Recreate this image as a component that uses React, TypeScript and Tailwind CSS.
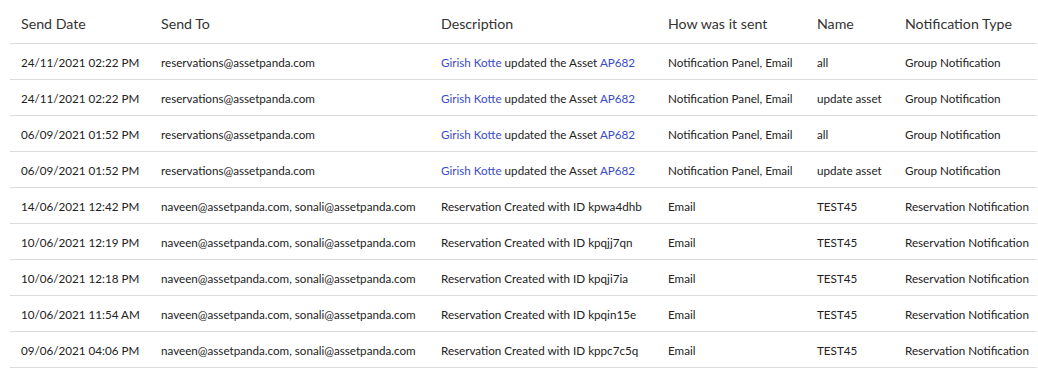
const rows = [
  { date: "24/11/2021 02:22 PM", to: "reservations@assetpanda.com", kind: "asset", via: "Notification Panel, Email", name: "all", type: "Group Notification" },
  { date: "24/11/2021 02:22 PM", to: "reservations@assetpanda.com", kind: "asset", via: "Notification Panel, Email", name: "update asset", type: "Group Notification" },
  { date: "06/09/2021 01:52 PM", to: "reservations@assetpanda.com", kind: "asset", via: "Notification Panel, Email", name: "all", type: "Group Notification" },
  { date: "06/09/2021 01:52 PM", to: "reservations@assetpanda.com", kind: "asset", via: "Notification Panel, Email", name: "update asset", type: "Group Notification" },
  { date: "14/06/2021 12:42 PM", to: "naveen@assetpanda.com, sonali@assetpanda.com", kind: "kpwa4dhb", via: "Email", name: "TEST45", type: "Reservation Notification" },
  { date: "10/06/2021 12:19 PM", to: "naveen@assetpanda.com, sonali@assetpanda.com", kind: "kpqjj7qn", via: "Email", name: "TEST45", type: "Reservation Notification" },
  { date: "10/06/2021 12:18 PM", to: "naveen@assetpanda.com, sonali@assetpanda.com", kind: "kpqji7ia", via: "Email", name: "TEST45", type: "Reservation Notification" },
  { date: "10/06/2021 11:54 AM", to: "naveen@assetpanda.com, sonali@assetpanda.com", kind: "kpqin15e", via: "Email", name: "TEST45", type: "Reservation Notification" },
  { date: "09/06/2021 04:06 PM", to: "naveen@assetpanda.com, sonali@assetpanda.com", kind: "kppc7c5q", via: "Email", name: "TEST45", type: "Reservation Notification" },
];

const headers = ["Send Date", "Send To", "Description", "How was it sent", "Name", "Notification Type"];

export default function App() {
  return (
    <div className="min-h-screen bg-white pl-[10px] pr-[1px]" style={{ fontFamily: "Lato, 'Liberation Sans', sans-serif" }}>
      <table className="w-[1027px] table-fixed border-collapse text-left">
        <colgroup>
          <col className="w-[140px]" />
          <col className="w-[280px]" />
          <col className="w-[227px]" />
          <col className="w-[149px]" />
          <col className="w-[88px]" />
          <col className="w-[143px]" />
        </colgroup>
        <thead>
          <tr className="border-b border-[#dcdcdc]">
            {headers.map((h) => (
              <th key={h} className="pl-[11px] pt-[14px] pb-[9px] text-[14.2px] font-normal leading-5 text-[#333] whitespace-nowrap">
                {h}
              </th>
            ))}
          </tr>
        </thead>
        <tbody className="text-[11.65px] leading-4 text-[#222]">
          {rows.map((r, i) => (
            <tr key={i} className="border-b border-[#dcdcdc]">
              <td className="pl-[11px] pt-[11px] pb-[8px] whitespace-nowrap">{r.date}</td>
              <td className="pl-[11px] pt-[11px] pb-[8px] whitespace-nowrap">{r.to}</td>
              <td className="pl-[11px] pt-[11px] pb-[8px] whitespace-nowrap">
                {r.kind === "asset" ? (
                  <>
                    <a className="text-[#3a4bc8]">Girish Kotte</a> updated the Asset <a className="text-[#3a4bc8]">AP682</a>
                  </>
                ) : (
                  <>Reservation Created with ID {r.kind}</>
                )}
              </td>
              <td className="pl-[11px] pt-[11px] pb-[8px] whitespace-nowrap">{r.via}</td>
              <td className="pl-[11px] pt-[11px] pb-[8px] whitespace-nowrap">{r.name}</td>
              <td className="pl-[11px] pt-[11px] pb-[8px] whitespace-nowrap">{r.type}</td>
            </tr>
          ))}
        </tbody>
      </table>
    </div>
  );
}
